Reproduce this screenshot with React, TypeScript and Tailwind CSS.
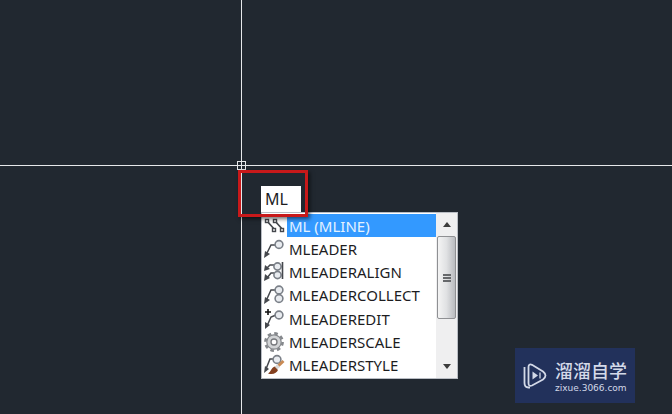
import { useState } from 'react'
import type { ReactNode } from 'react'

const circle = { fill: '#e9ecf0', stroke: '#7b8088', strokeWidth: 1.6 }

function Icon({ children }: { children: ReactNode }) {
  return (
    <svg viewBox="0 0 22 22" className="h-[22px] w-[22px]" fill="none" stroke="#45484d" strokeWidth="1.5" aria-hidden="true">
      {children}
    </svg>
  )
}

function MlineIcon() {
  return (
    <Icon>
      <path d="M4 6L12 15M12 6L20 15" strokeWidth="1.7" />
      <g fill="#fff" strokeWidth="1.4">
        <rect x="2.500" y="4.500" width="3" height="3" />
        <rect x="10.500" y="4.500" width="3" height="3" />
        <rect x="9.500" y="13.500" width="3" height="3" />
        <rect x="17.500" y="13.500" width="3" height="3" />
      </g>
    </Icon>
  )
}

function LeaderIcon() {
  return (
    <Icon>
      <path d="M3 17L8 7H13" />
      <path d="M1 20L2 13L7 16Z" fill="#45484d" stroke="none" />
      <circle cx="16" cy="6.500" r="3.900" {...circle} />
    </Icon>
  )
}

function AlignIcon() {
  return (
    <Icon>
      <path d="M3 8L7 4H12M4 17L8 12H12" />
      <path d="M1 10L2 4L7 8ZM1 20L2 13L7 17Z" fill="#45484d" stroke="none" />
      <circle cx="14.500" cy="5.500" r="3.600" {...circle} />
      <circle cx="14.500" cy="14" r="3.600" {...circle} />
      <path d="M19.500 1V18" strokeWidth="1.6" />
    </Icon>
  )
}

function CollectIcon() {
  return (
    <Icon>
      <path d="M3 17L8 6H13" />
      <path d="M1 20L2 13L7 16Z" fill="#45484d" stroke="none" />
      <circle cx="16" cy="6" r="3.900" {...circle} />
      <circle cx="16" cy="14.500" r="3.900" {...circle} />
    </Icon>
  )
}

function EditIcon() {
  return (
    <Icon>
      <path d="M4 18L8 9L13 7" />
      <path d="M2 21L2 14L7 17Z" fill="#45484d" stroke="none" />
      <circle cx="16" cy="7" r="3.900" {...circle} />
      <path d="M2 4H8M5 1V7" stroke="#111" strokeWidth="1.6" />
    </Icon>
  )
}

function ScaleIcon() {
  return (
    <Icon>
      <circle cx="11" cy="11" r="8.600" stroke="#85888c" strokeWidth="2.600" strokeDasharray="3.600 3.150" />
      <circle cx="11" cy="11" r="7.200" fill="#d2d4d6" stroke="#85888c" strokeWidth="1.200" />
      <circle cx="11" cy="11" r="3" fill="#fff" stroke="#77797d" strokeWidth="1.300" />
    </Icon>
  )
}

function StyleIcon() {
  return (
    <Icon>
      <path d="M3 15L7 5H12" />
      <path d="M1 19L2 12L6 15Z" fill="#45484d" stroke="none" />
      <circle cx="14" cy="5.500" r="3.900" {...circle} />
      <path d="M20.500 7L13 14" stroke="#c98a54" strokeWidth="3" />
      <path d="M14.500 10.500L17 13L14 15.500L11.500 13Z" fill="#d9d9d9" stroke="none" />
      <path d="M11.500 12.500L15 16C14 19 10 21 5 19.500C8 18 8 14 11.500 12.500Z" fill="#84401f" stroke="none" />
    </Icon>
  )
}

const commands = [
  { name: 'ML (MLINE)', icon: <MlineIcon /> },
  { name: 'MLEADER', icon: <LeaderIcon /> },
  { name: 'MLEADERALIGN', icon: <AlignIcon /> },
  { name: 'MLEADERCOLLECT', icon: <CollectIcon /> },
  { name: 'MLEADEREDIT', icon: <EditIcon /> },
  { name: 'MLEADERSCALE', icon: <ScaleIcon /> },
  { name: 'MLEADERSTYLE', icon: <StyleIcon /> },
]

function ScrollBar() {
  return (
    <div className="flex w-[21px] flex-col bg-[#efeff0] px-px">
      <button type="button" aria-label="Scroll up" className="flex h-[23px] items-center justify-center">
        <svg viewBox="0 0 8 5" className="h-[5px] w-2" aria-hidden="true">
          <path d="M0 5L4 0L8 5Z" fill="#3c3c3c" />
        </svg>
      </button>
      <div className="flex-1">
        <div className="flex h-[83px] flex-col items-center justify-center gap-px rounded-[2px] border border-[#8f9093] bg-linear-to-r from-[#f4f4f4] via-[#e0e1e3] to-[#b9bbbf]">
          <span className="h-[2px] w-2 bg-[#66686b]" />
          <span className="h-[2px] w-2 bg-[#66686b]" />
          <span className="h-[2px] w-2 bg-[#66686b]" />
        </div>
      </div>
      <button type="button" aria-label="Scroll down" className="flex h-[23px] items-center justify-center">
        <svg viewBox="0 0 8 5" className="h-[5px] w-2" aria-hidden="true">
          <path d="M0 0L4 5L8 0Z" fill="#3c3c3c" />
        </svg>
      </button>
    </div>
  )
}

function Watermark() {
  return (
    <div className="absolute right-[37px] bottom-[11px] flex h-[55px] w-[120px] items-center gap-2 bg-[#22315b] pl-2 text-[#d3d9e8]">
      <svg viewBox="0 0 24 26" className="h-[26px] w-6 shrink-0" fill="none" stroke="#d3d9e8" strokeWidth="1.800" aria-hidden="true">
        <path d="M1.500 4V20Q1.500 24.500 5.500 24.500H7" />
        <path d="M5.500 4Q5.500 0.500 9 1.800L20 8.500Q25 12.500 20 16.500L9 22.500Q5.500 24 5.500 20Z" />
        <path d="M9.500 8.500L15 12.500L9.500 16.500Z" fill="#d3d9e8" stroke="none" />
        <path d="M17 9.500V15.500" strokeWidth="1.300" />
      </svg>
      <div className="flex flex-col">
        <span className="font-['Noto_Sans_CJK_SC',sans-serif] text-[18px] leading-6 font-medium whitespace-nowrap">溜溜自学</span>
        <span className="font-['DejaVu_Sans',sans-serif] text-[9px] leading-3 whitespace-nowrap">zixue.3066.com</span>
      </div>
    </div>
  )
}

export default function App() {
  const [query, setQuery] = useState('ML')
  const [selected, setSelected] = useState(0)

  return (
    <main className="relative min-h-screen overflow-hidden bg-[#212830] font-['Noto_Sans','Open_Sans',sans-serif]">
      {/* Crosshair */}
      <div className="absolute inset-y-0 left-[241px] w-px bg-[#e6e8ea]" />
      <div className="absolute inset-x-0 top-[165px] h-px bg-[#e6e8ea]" />
      <div className="absolute top-[161px] left-[237px] h-[9px] w-[9px] border border-[#e6e8ea]" />

      {/* Dynamic input with suggestions */}
      <div className="absolute top-[186px] left-[261px] flex w-[197px] flex-col">
        <input
          aria-label="Command"
          value={query}
          onChange={e => setQuery(e.target.value)}
          className="h-[26px] w-10 bg-white px-1 text-[16px] text-[#1d1d1f] outline-none"
        />
        <div className="flex h-[167px] border border-[#b9bdc4] bg-white">
          <ul role="listbox" aria-label="Commands" className="flex flex-1 flex-col py-px">
            {commands.map((c, i) => (
              <li key={c.name} role="option" aria-selected={i === selected} className="flex min-h-0 flex-1">
                <button type="button" onClick={() => setSelected(i)} className="flex flex-1 items-center gap-[2px] pl-px text-left text-[15px] leading-5">
                  {c.icon}
                  <span className={`flex h-full flex-1 items-center pl-[2px] ${i === selected ? 'bg-[#3399ff] text-[#e4f2ff]' : 'text-[#1d1d1f]'}`}>
                    {c.name}
                  </span>
                </button>
              </li>
            ))}
          </ul>
          <ScrollBar />
        </div>
      </div>

      {/* Highlight frame */}
      <div className="pointer-events-none absolute top-[170px] left-[238px] h-[47px] w-[70px] border-[3px] border-[#c8191a] shadow-[2px_2px_4px_rgba(0,0,0,0.55)]" />

      <Watermark />
    </main>
  )
}
